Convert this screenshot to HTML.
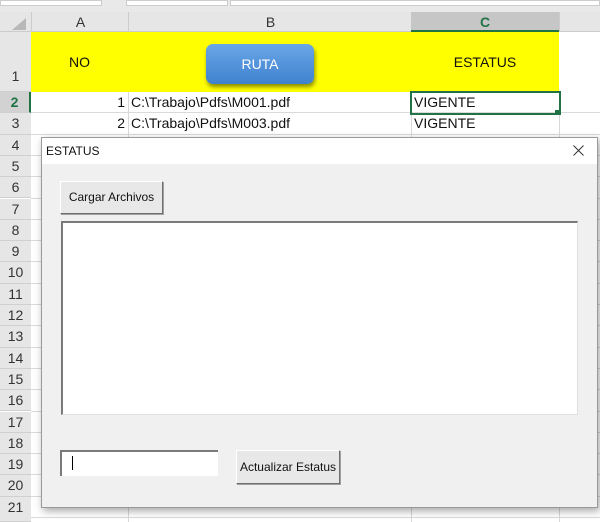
<!DOCTYPE html><html style="overflow:hidden;height:522px"><head><style>
body{margin:0;width:600px;height:522px;overflow:hidden;background:#fff;font-family:"Liberation Sans",sans-serif;position:relative}
.a{position:absolute}
.rn{position:absolute;left:0;width:31px;text-align:center;font-size:14px;color:#333;background:#e6e6e6;border-bottom:1px solid #d0d0d0;box-sizing:border-box}
.hl{position:absolute;top:92px;height:430px;width:1px;background:#d8d8d8}
.rl{position:absolute;left:31px;right:0;height:1px;background:#dadada}
.cell{position:absolute;font-size:14px;color:#111}
.btn{position:absolute;background:#e8e8e8;border:1px solid;border-color:#fff #707070 #707070 #fff;box-shadow:1px 1px 0 #a0a0a0;font-size:12px;color:#111;text-align:center;box-sizing:border-box}
</style></head><body>
<div class="a" style="left:0;top:0;width:600px;height:12px;background:#e9e9e9"></div>
<div class="a" style="left:0;top:0;width:100px;height:4px;background:#fff;border:1px solid #ccc"></div>
<div class="a" style="left:126px;top:0;width:100px;height:4px;background:#fff;border:1px solid #ccc"></div>
<div class="a" style="left:230px;top:0;width:368px;height:4px;background:#fff;border:1px solid #ccc"></div>
<div class="a" style="left:0;top:12px;width:600px;height:20px;background:#e6e6e6;border-bottom:1px solid #ccc;box-sizing:border-box"></div>
<div class="a" style="left:12px;top:18px;width:0;height:0;border-left:14px solid transparent;border-bottom:12px solid #b8b8b8"></div>
<div class="a" style="left:31px;top:12px;width:97px;height:20px;line-height:20px;text-align:center;font-size:14px;color:#333;border-left:1px solid #ccc">A</div>
<div class="a" style="left:128px;top:12px;width:283px;height:20px;line-height:20px;text-align:center;font-size:14px;color:#333;border-left:1px solid #ccc">B</div>
<div class="a" style="left:411px;top:12px;width:148px;height:20px;line-height:20px;text-align:center;font-size:14px;font-weight:bold;color:#217346;background:#c6c6c6;border-bottom:2px solid #217346;box-sizing:border-box">C</div>
<div class="a" style="left:559px;top:12px;width:1px;height:20px;background:#ccc"></div>
<div class="rn" style="top:32px;height:60px;line-height:88px">1</div>
<div class="a" style="left:31px;top:32px;width:528px;height:60px;background:#ffff00"></div>
<div class="cell" style="left:31px;top:54px;width:97px;text-align:center">NO</div>
<div class="cell" style="left:411px;top:54px;width:148px;text-align:center">ESTATUS</div>
<div class="a" style="left:206px;top:44px;width:108px;height:40px;border-radius:7px;background:linear-gradient(#6aa6e6,#3f82cf);box-shadow:1px 3px 4px rgba(0,0,0,.45);color:#fff;font-size:14px;text-align:center;line-height:40px">RUTA</div>
<div class="hl" style="left:128px"></div><div class="hl" style="left:411px"></div><div class="hl" style="left:559px"></div>
<div id="rows"></div>
<script>
var h='';for(var n=2;n<=21;n++){var t=92+(n-2)*21.3;h+='<div class="rn" style="top:'+t+'px;height:21.3px;line-height:21px;'+(n==2?'color:#217346;font-weight:bold;background:#d2d2d2;border-right:2px solid #217346':'')+'">'+n+'</div><div class="rl" style="top:'+(t+20.3)+'px"></div>';}
h+='<div class="rn" style="top:517px;height:5px"></div>';
document.getElementById('rows').innerHTML=h;
</script>
<div class="cell" style="left:31px;top:94px;width:94px;text-align:right">1</div>
<div class="cell" style="left:131px;top:94px">C:\Trabajo\Pdfs\M001.pdf</div>
<div class="cell" style="left:414px;top:94px">VIGENTE</div>
<div class="a" style="left:410px;top:91px;width:147px;height:20px;border:2px solid #217346"></div>
<div class="a" style="left:555px;top:110px;width:5px;height:5px;background:#217346"></div>
<div class="cell" style="left:31px;top:115px;width:94px;text-align:right">2</div>
<div class="cell" style="left:131px;top:115px">C:\Trabajo\Pdfs\M003.pdf</div>
<div class="cell" style="left:414px;top:115px">VIGENTE</div>
<div class="a" style="left:41px;top:137px;width:557px;height:371px;background:#f0f0f0;border:1px solid #9a9a9a;box-sizing:border-box;box-shadow:2px 3px 8px rgba(0,0,0,.35)">
<div class="a" style="left:0;top:0;right:0;height:26px;background:#fff;font-size:12px;line-height:26px;padding-left:4px;color:#111">ESTATUS</div>
<svg class="a" style="right:13px;top:7px" width="11" height="11"><path d="M0.5 0.5L10.5 10.5M10.5 0.5L0.5 10.5" stroke="#333" stroke-width="1"/></svg>
</div>
<div class="btn" style="left:60px;top:181px;width:103px;height:33px;line-height:31px">Cargar Archivos</div>
<div class="a" style="left:61px;top:221px;width:517px;height:194px;background:#fff;border-top:2px solid #7a7a7a;border-left:2px solid #7a7a7a;border-right:1px solid #e0e0e0;border-bottom:1px solid #e0e0e0;box-sizing:border-box"></div>
<div class="a" style="left:60px;top:450px;width:158px;height:26px;background:#fff;border-top:2px solid #7a7a7a;border-left:2px solid #7a7a7a;box-sizing:border-box"></div>
<div class="a" style="left:72px;top:456px;width:1px;height:14px;background:#000"></div>
<div class="btn" style="left:236px;top:450px;width:104px;height:34px;line-height:32px">Actualizar Estatus</div>
</body></html>
